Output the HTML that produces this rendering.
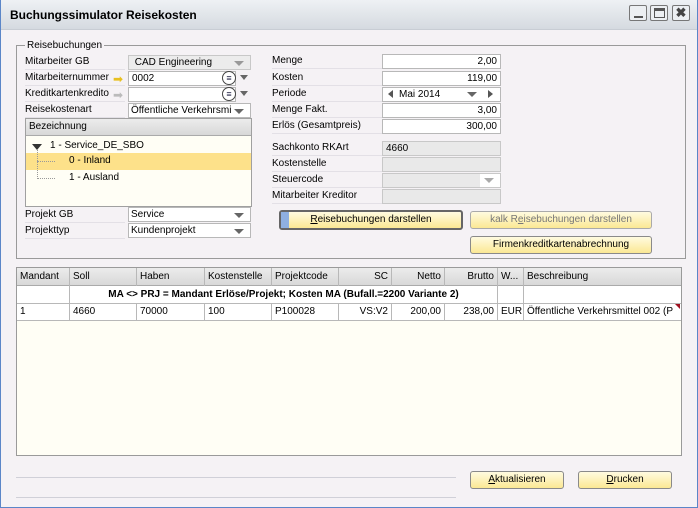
<!DOCTYPE html>
<html><head><meta charset="utf-8"><style>
*{box-sizing:border-box;margin:0;padding:0}
body{width:698px;height:508px;overflow:hidden;background:#f5f2f5;font-family:"Liberation Sans",sans-serif;font-size:10px;color:#000;position:relative}
.a{position:absolute;white-space:nowrap}
.win{position:absolute;left:0;top:0;width:698px;height:508px;border:1px solid #5b86c8;border-top:none}
.title{position:absolute;left:1px;top:0;width:696px;height:30px;background:linear-gradient(#eef1f4,#d5dae0);border-bottom:1px solid #c8cdd4}
.lbl{position:absolute;height:15px;line-height:14px;border-bottom:1px solid #e3e0e6;padding-left:0}
.in{position:absolute;height:15px;border:1px solid #b8b8b8;background:#fff;line-height:13px;padding:0 3px}
.dis{background:#e9e9e9;border-color:#c8c8c8}
.r{text-align:right}
.arr{position:absolute;width:0;height:0;border-left:5px solid transparent;border-right:5px solid transparent;border-top:5px solid #666}
.btn{position:absolute;height:18px;border:1px solid #8a8a8a;border-radius:3px;background:linear-gradient(#fffbe0,#fbe894);text-align:center;line-height:16px}
.col{position:absolute;top:0;height:53px;border-right:1px solid #b8b8b8}
.cell{position:absolute;line-height:17px;padding:0 3px;white-space:nowrap;overflow:hidden}
</style></head><body>
<div class="win"></div>
<div class="title"></div>
<div class="a" style="left:10px;top:8px;font-size:12px;font-weight:bold">Buchungssimulator Reisekosten</div>
<div class="a" style="left:629px;top:5px;width:18px;height:16px;border:1px solid #777;border-radius:2px;background:#eceff2"><div style="position:absolute;left:4px;top:10px;width:9px;height:2px;background:#555"></div></div>
<div class="a" style="left:650px;top:5px;width:18px;height:16px;border:1px solid #777;border-radius:2px;background:#eceff2"><div style="position:absolute;left:3px;top:2px;width:11px;height:10px;border:1px solid #555;border-top:3px solid #555"></div></div>
<div class="a" style="left:672px;top:5px;width:18px;height:16px;border:1px solid #777;border-radius:2px;background:#eceff2;text-align:center;font-weight:bold;font-size:13px;line-height:14px;color:#444">✖</div>

<div class="a" style="left:16px;top:45px;width:670px;height:214px;border:1px solid #9a9a9a"></div>
<div class="a" style="left:25px;top:40px;background:#f5f2f5;padding:0 2px">Reisebuchungen</div>

<div class="lbl" style="left:25px;top:55px;width:100px">Mitarbeiter GB</div>
<div class="in dis" style="left:128px;top:55px;width:123px;background:#ececec">&nbsp;CAD Engineering</div><div class="arr" style="left:234px;top:61px;border-top-color:#999"></div>
<div class="lbl" style="left:25px;top:71px;width:100px">Mitarbeiternummer</div>
<div class="a" style="left:113px;top:72px;color:#e8c020;font-size:12px">➡</div>
<div class="in" style="left:128px;top:71px;width:108px">0002</div>
<div class="a" style="left:222px;top:71px;width:14px;height:14px;border:1px solid #444;border-radius:7px;background:#fff;font-size:9px;line-height:12px;text-align:center;color:#224">≡</div>
<div class="arr" style="left:240px;top:75px;border-left-width:4px;border-right-width:4px"></div>
<div class="lbl" style="left:25px;top:87px;width:100px">Kreditkartenkredito</div>
<div class="a" style="left:113px;top:88px;color:#bbb;font-size:12px">➡</div>
<div class="in" style="left:128px;top:87px;width:108px"></div>
<div class="a" style="left:222px;top:87px;width:14px;height:14px;border:1px solid #444;border-radius:7px;background:#fff;font-size:9px;line-height:12px;text-align:center;color:#224">≡</div>
<div class="arr" style="left:240px;top:91px;border-left-width:4px;border-right-width:4px"></div>
<div class="lbl" style="left:25px;top:103px;width:100px">Reisekostenart</div>
<div class="in" style="left:128px;top:103px;width:123px;overflow:hidden;padding-left:2px">Öffentliche Verkehrsmi</div><div class="arr" style="left:234px;top:109px"></div>

<div class="a" style="left:25px;top:118px;width:227px;height:89px;border:1px solid #a0a0a0;background:#fffef5"></div>
<div class="a" style="left:26px;top:119px;width:225px;height:17px;background:linear-gradient(#ececec,#d8d8d8);border-bottom:1px solid #aaa;line-height:16px;padding-left:3px">Bezeichnung</div>
<div class="arr" style="left:32px;top:144px;border-top-width:6px;border-top-color:#333"></div>
<div class="a" style="left:50px;top:139px;line-height:14px">1 - Service_DE_SBO</div>
<div class="a" style="left:26px;top:153px;width:225px;height:17px;background:#fde18a"></div>
<div class="a" style="left:37px;top:150px;height:29px;border-left:1px dotted #999"></div>
<div class="a" style="left:37px;top:161px;width:18px;border-top:1px dotted #999"></div>
<div class="a" style="left:37px;top:178px;width:18px;border-top:1px dotted #999"></div>
<div class="a" style="left:69px;top:155px">0 - Inland</div>
<div class="a" style="left:69px;top:172px">1 - Ausland</div>

<div class="lbl" style="left:25px;top:208px;width:100px">Projekt GB</div>
<div class="in" style="left:128px;top:207px;width:123px;padding-left:2px">Service</div><div class="arr" style="left:234px;top:213px"></div>
<div class="lbl" style="left:25px;top:224px;width:100px">Projekttyp</div>
<div class="in" style="left:128px;top:223px;width:123px;padding-left:2px">Kundenprojekt</div><div class="arr" style="left:234px;top:229px"></div>

<div class="lbl" style="left:272px;top:54px;width:110px">Menge</div><div class="in r" style="left:382px;top:54px;width:119px">2,00</div>
<div class="lbl" style="left:272px;top:71px;width:110px">Kosten</div><div class="in r" style="left:382px;top:71px;width:119px">119,00</div>
<div class="lbl" style="left:272px;top:87px;width:110px">Periode</div><div class="in" style="left:382px;top:87px;width:119px;padding-left:16px">Mai 2014</div>
<div class="a" style="left:388px;top:90px;border-top:4px solid transparent;border-bottom:4px solid transparent;border-right:5px solid #555"></div>
<div class="arr" style="left:467px;top:92px"></div>
<div class="a" style="left:488px;top:90px;border-top:4px solid transparent;border-bottom:4px solid transparent;border-left:5px solid #555"></div>
<div class="lbl" style="left:272px;top:103px;width:110px">Menge Fakt.</div><div class="in r" style="left:382px;top:103px;width:119px">3,00</div>
<div class="lbl" style="left:272px;top:119px;width:110px">Erlös (Gesamtpreis)</div><div class="in r" style="left:382px;top:119px;width:119px">300,00</div>
<div class="lbl" style="left:272px;top:141px;width:110px">Sachkonto RKArt</div><div class="in dis" style="left:382px;top:141px;width:119px">4660</div>
<div class="lbl" style="left:272px;top:157px;width:110px">Kostenstelle</div><div class="in dis" style="left:382px;top:157px;width:119px"></div>
<div class="lbl" style="left:272px;top:173px;width:110px">Steuercode</div><div class="in dis" style="left:382px;top:173px;width:119px"></div>
<div class="a" style="left:480px;top:174px;width:20px;height:13px;background:#fff"></div><div class="arr" style="left:484px;top:178px;border-top-color:#aaa"></div>
<div class="lbl" style="left:272px;top:189px;width:110px">Mitarbeiter Kreditor</div><div class="in dis" style="left:382px;top:189px;width:119px"></div>

<div class="btn" style="left:279px;top:210px;width:184px;height:20px;border:2px solid #666;line-height:16px"><div style="position:absolute;left:0;top:0;width:8px;height:16px;background:#8fb0e0"></div><u>R</u>eisebuchungen darstellen</div>
<div class="btn" style="left:470px;top:211px;width:182px;color:#777;border-color:#aaa">kalk R<u>e</u>isebuchungen darstellen</div>
<div class="btn" style="left:470px;top:236px;width:182px">Firmenkreditkartenabrechnung</div>

<div class="a" style="left:16px;top:267px;width:666px;height:189px;border:1px solid #9a9a9a;background:#fffef5;overflow:hidden">
 <div class="a" style="left:0;top:0;width:664px;height:18px;background:linear-gradient(#ececec,#d8d8d8);border-bottom:1px solid #aaa"></div>
 <div class="a" style="left:0;top:18px;width:664px;height:35px;background:#fff"></div>
 <div class="a" style="left:0;top:35px;width:664px;border-top:1px solid #b8b8b8"></div>
 <div class="a" style="left:0;top:52px;width:664px;border-top:1px solid #b8b8b8"></div>
 <div class="col" style="left:52px"></div>
 <div class="col" style="left:119px;height:18px"></div><div class="col" style="left:119px;top:35px;height:18px"></div>
 <div class="col" style="left:187px;height:18px"></div><div class="col" style="left:187px;top:35px;height:18px"></div>
 <div class="col" style="left:254px;height:18px"></div><div class="col" style="left:254px;top:35px;height:18px"></div>
 <div class="col" style="left:321px;height:18px"></div><div class="col" style="left:321px;top:35px;height:18px"></div>
 <div class="col" style="left:374px;height:18px"></div><div class="col" style="left:374px;top:35px;height:18px"></div>
 <div class="col" style="left:427px;height:18px"></div><div class="col" style="left:427px;top:35px;height:18px"></div>
 <div class="col" style="left:480px"></div>
 <div class="col" style="left:506px"></div>
 <div class="cell" style="left:0;top:0;width:52px">Mandant</div>
 <div class="cell" style="left:53px;top:0">Soll</div>
 <div class="cell" style="left:120px;top:0">Haben</div>
 <div class="cell" style="left:188px;top:0">Kostenstelle</div>
 <div class="cell" style="left:255px;top:0">Projektcode</div>
 <div class="cell r" style="left:322px;top:0;width:52px">SC</div>
 <div class="cell r" style="left:375px;top:0;width:52px">Netto</div>
 <div class="cell r" style="left:428px;top:0;width:52px">Brutto</div>
 <div class="cell" style="left:481px;top:0;width:25px">W...</div>
 <div class="cell" style="left:507px;top:0">Beschreibung</div>
 <div class="cell" style="left:53px;top:18px;width:427px;text-align:center;font-weight:bold">MA &lt;&gt; PRJ = Mandant Erlöse/Projekt; Kosten MA (Bufall.=2200 Variante 2)</div>
 <div class="cell" style="left:0;top:35px">1</div>
 <div class="cell" style="left:53px;top:35px">4660</div>
 <div class="cell" style="left:120px;top:35px">70000</div>
 <div class="cell" style="left:188px;top:35px">100</div>
 <div class="cell" style="left:255px;top:35px">P100028</div>
 <div class="cell r" style="left:322px;top:35px;width:52px">VS:V2</div>
 <div class="cell r" style="left:375px;top:35px;width:52px">200,00</div>
 <div class="cell r" style="left:428px;top:35px;width:52px">238,00</div>
 <div class="cell" style="left:481px;top:35px;width:25px">EUR</div>
 <div class="cell" style="left:507px;top:35px;width:157px">Öffentliche Verkehrsmittel 002 (P</div>
 <div class="a" style="left:658px;top:36px;border-top:5px solid #a01020;border-left:5px solid transparent"></div>
</div>

<div class="a" style="left:16px;top:477px;width:440px;border-top:1px solid #d0d0d8"></div>
<div class="a" style="left:16px;top:497px;width:440px;border-top:1px solid #d0d0d8"></div>
<div class="btn" style="left:470px;top:471px;width:94px"><u>A</u>ktualisieren</div>
<div class="btn" style="left:578px;top:471px;width:94px"><u>D</u>rucken</div>
</body></html>
